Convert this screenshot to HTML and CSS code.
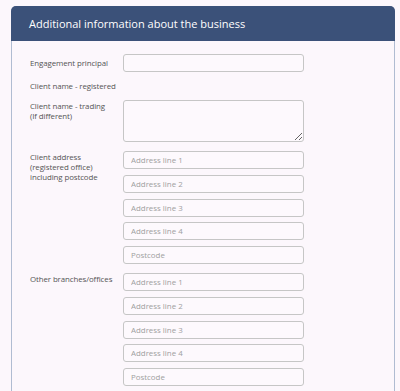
FILE: index.html
```html
<!DOCTYPE html>
<html lang="en">
<head>
    <meta charset="UTF-8">
    <meta name="viewport" content="width=device-width, initial-scale=1.0">
    <title>Additional information</title>
    <link rel="stylesheet" href="styles.css">
</head>
<body>
    <div class="panel">
        <div class="panel-header">Additional information about the business</div>
        <div class="panel-body">
            <div class="row">
                <label class="row-label label-mid" for="principal">Engagement principal</label>
                <div class="row-fields">
                    <input type="text" id="principal" class="field">
                </div>
            </div>
            <div class="row">
                <span class="row-label label-flat">Client name - registered</span>
            </div>
            <div class="row">
                <label class="row-label" for="trading">Client name - trading<br>(If different)</label>
                <div class="row-fields">
                    <textarea id="trading" class="field field-area"></textarea>
                </div>
            </div>
            <div class="row">
                <label class="row-label" for="reg-1">Client address (registered office) including postcode</label>
                <div class="row-fields">
                    <input type="text" id="reg-1" class="field" placeholder="Address line 1">
                    <input type="text" class="field" placeholder="Address line 2">
                    <input type="text" class="field" placeholder="Address line 3">
                    <input type="text" class="field" placeholder="Address line 4">
                    <input type="text" class="field" placeholder="Postcode">
                </div>
            </div>
            <div class="row">
                <label class="row-label" for="branch-1">Other branches/offices</label>
                <div class="row-fields">
                    <input type="text" id="branch-1" class="field" placeholder="Address line 1">
                    <input type="text" class="field" placeholder="Address line 2">
                    <input type="text" class="field" placeholder="Address line 3">
                    <input type="text" class="field" placeholder="Address line 4">
                    <input type="text" class="field" placeholder="Postcode">
                </div>
            </div>
        </div>
    </div>
</body>
</html>
```

FILE: styles.css
```css
body {
    font-family: "Open Sans", "Liberation Sans", sans-serif;
    margin: 0;
    background-color: #fcf7fc;
    color: #555;
}
.panel {
    width: 382px;
    margin: 6px 0 0 11px;
    border: 1px solid #b0bcd2;
    border-bottom: none;
    border-radius: 5px 5px 0 0;
    background-color: #fcf7fc;
}
.panel-header {
    height: 35px;
    line-height: 35px;
    padding-left: 18px;
    margin: -1px -1px 0 -1px;
    background-color: #3b5179;
    color: #fff;
    font-size: 11px;
    border-radius: 5px 5px 0 0;
}
.panel-body {
    padding: 13px 0 20px 18px;
}
.row {
    display: flex;
    margin-bottom: 9px;
}
.row-label {
    width: 84px;
    margin-right: 9px;
    flex-shrink: 0;
    font-size: 7.9px;
    letter-spacing: -0.1px;
    line-height: 10px;
    padding-top: 1px;
}
.label-mid {
    padding-top: 4px;
}
.label-flat {
    padding-top: 0;
    white-space: nowrap;
}
.row-fields {
    display: flex;
    flex-direction: column;
    gap: 5.75px;
}
.field {
    box-sizing: border-box;
    width: 181px;
    height: 18px;
    margin: 0;
    padding: 0 7px;
    border: 1px solid #c6c6c6;
    border-radius: 3px;
    background-color: #fdf9fd;
    font-family: inherit;
    font-size: 7.9px;
    color: #555;
    outline: none;
}
.field::placeholder {
    color: #a0a0a0;
}
textarea.field-area {
    display: block;
    height: 42px;
    padding: 4px 7px;
    border: 1px solid #c6c6c6;
    resize: vertical;
    overflow: hidden;
}
```
